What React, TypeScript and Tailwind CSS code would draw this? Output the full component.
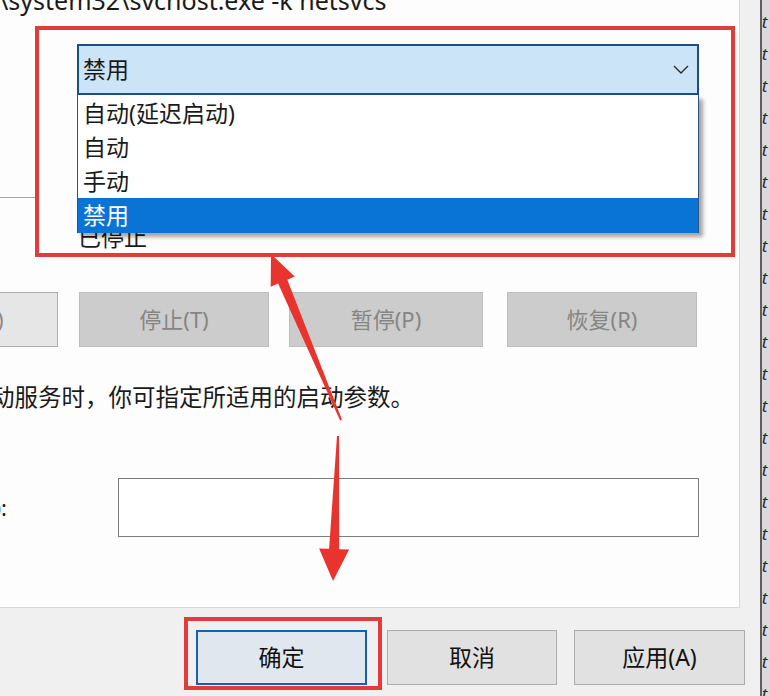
import React from "react";

const font = "font-['Noto_Sans','Noto_Sans_CJK_SC',sans-serif]";

function Chevron() {
  return (
    <svg width="16" height="9" viewBox="0 0 16 9" className="mr-[8px]">
      <path d="M1 1 L8 8 L15 1" fill="none" stroke="#2b2b2b" strokeWidth="1.4" />
    </svg>
  );
}

function DisabledBtn({ label, w, ml }: { label: string; w: string; ml: string }) {
  return (
    <div
      className={`${w} ${ml} h-[55px] shrink-0 bg-[#cccccc] border border-[#bdbdbd] flex items-center justify-center text-[22px] text-[#858585]`}
    >
      {label}
    </div>
  );
}

export default function App() {
  const strip = Array.from({ length: 22 });
  return (
    <div className={`relative w-[770px] h-[696px] overflow-hidden bg-[#f0f0f0] flex ${font}`}>
      {/* main dialog column */}
      <div className="w-[760px] h-full flex flex-col shrink-0">
        {/* white content panel */}
        <div className="relative w-[740px] h-[608px] shrink-0 bg-[#fdfdfe] border-r border-b border-[#d9d9d9] overflow-hidden flex flex-col">
          {/* path line */}
          <div className="mt-[-12px] ml-[-1px] h-[25px] leading-[25px] text-[25px] text-[#1a1a1a] whitespace-nowrap">
            \system32\svchost.exe -k netsvcs
          </div>

          {/* combo header */}
          <div className="mt-[31px] ml-[77px] w-[622px] h-[51px] shrink-0 bg-[#cce4f7] border-2 border-[#1c4f86] flex items-center justify-between pl-[4px]">
            <span className="text-[23px] text-[#1a1a1a] leading-none">禁用</span>
            <Chevron />
          </div>

          {/* separator */}
          <div className="mt-[102px] w-[36px] h-px bg-[#a8a8a8] shrink-0" />

          {/* status row */}
          <div className="mt-[28px] ml-[78px] h-[22px] leading-[22px] text-[23px] text-[#1a1a1a] shrink-0">
            已停止
          </div>

          {/* service buttons */}
          <div className="mt-[44px] flex shrink-0">
            <div className="w-[190px] ml-[-132px] h-[55px] shrink-0 bg-[#e6e6e6] border border-[#adadad] flex items-center justify-center pl-[12px] text-[22px] text-[#8a8a8a]">
              启动(S)
            </div>
            <DisabledBtn label="停止(T)" w="w-[190px]" ml="ml-[21px]" />
            <DisabledBtn label="暂停(P)" w="w-[194px]" ml="ml-[20px]" />
            <DisabledBtn label="恢复(R)" w="w-[190px]" ml="ml-[24px]" />
          </div>

          {/* description */}
          <div className="mt-[39px] ml-[-9px] h-[23px] leading-[23px] text-[23.5px] text-[#1a1a1a] whitespace-nowrap shrink-0">
            动服务时，你可指定所适用的启动参数。
          </div>

          {/* params row */}
          <div className="mt-[69px] flex items-center shrink-0">
            <div className="w-[7px] flex justify-end text-[22px] text-[#1a1a1a] whitespace-nowrap">
              启动参数(M):
            </div>
            <div className="ml-[111px] w-[581px] h-[59px] bg-white border border-[#7a7a80]" />
          </div>

          {/* dropdown list popup */}
          <div className="absolute left-[77px] top-[95px] w-[622px] h-[138px] bg-white border-x border-b border-[#2c5282] shadow-[4px_4px_4px_rgba(0,0,0,0.35)] flex flex-col pt-px">
            <div className="h-[34px] flex items-center pl-[5px] text-[23px] text-[#1a1a1a]">自动(延迟启动)</div>
            <div className="h-[34px] flex items-center pl-[5px] text-[23px] text-[#1a1a1a]">自动</div>
            <div className="h-[34px] flex items-center pl-[5px] text-[23px] text-[#1a1a1a]">手动</div>
            <div className="flex-1 flex items-center pl-[5px] text-[23px] text-white bg-[#0a74d6]">禁用</div>
          </div>
        </div>

        {/* bottom buttons */}
        <div className="flex-1 flex items-start pt-[22px]">
          <div className="ml-[196px] w-[171px] h-[55px] bg-[#e1e7ee] border-2 border-[#1560b0] flex items-center justify-center text-[23px] text-[#111]">
            确定
          </div>
          <div className="ml-[20px] w-[170px] h-[55px] bg-[#e1e1e1] border border-[#adadad] flex items-center justify-center text-[23px] text-[#111]">
            取消
          </div>
          <div className="ml-[17px] w-[171px] h-[55px] bg-[#e1e1e1] border border-[#adadad] flex items-center justify-center text-[23px] text-[#111]">
            应用(A)
          </div>
        </div>
      </div>

      {/* window edge */}
      <div className="w-[2px] h-full bg-[#5f5f62] shrink-0" />
      <div className="w-[8px] h-full bg-[#ddd8dc] overflow-hidden shrink-0">
        <div className="ml-[-9px] mt-[6px] flex flex-col text-[17px] leading-[32px] text-[#2a2a2a] italic">
          {strip.map((_, i) => (
            <span key={i} className="block h-[32px] whitespace-nowrap">lit</span>
          ))}
        </div>
      </div>

      {/* annotations */}
      <div className="absolute left-[35px] top-[26px] w-[700px] h-[231px] border-[4px] border-[#e23b3b] pointer-events-none" />
      <div className="absolute left-[184px] top-[617px] w-[198px] h-[73px] border-[4px] border-[#e23b3b] pointer-events-none" />
      <svg className="absolute left-0 top-0 pointer-events-none" width="770" height="696" viewBox="0 0 770 696">
        <polygon
          points="271,254 294.7,276.5 287.3,279.7 341.9,419.6 340.1,420.4 278.1,283.5 270.7,286.7"
          fill="#e8332f"
        />
        <polygon
          points="333,581 349.1,549.5 339.1,549.2 339,436 337,436 329.1,548.8 319.1,548.5"
          fill="#e8332f"
        />
      </svg>
    </div>
  );
}
